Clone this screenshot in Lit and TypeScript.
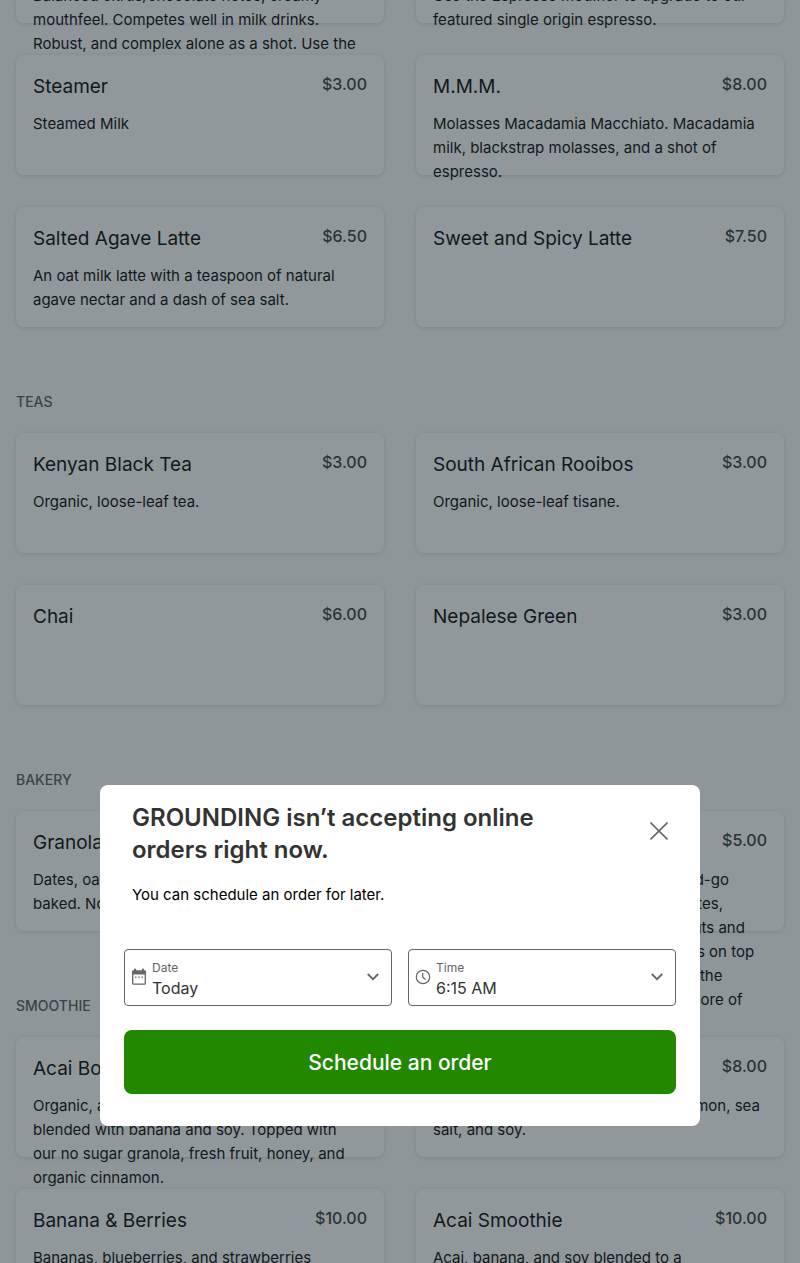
import { LitElement, html, css, svg } from "lit";
import { customElement, property } from "lit/decorators.js";

interface Item {
  name: string;
  price: string;
  text?: string;
}

interface Section {
  title?: string;
  items: Item[];
}

const MENU: Section[] = [
  {
    items: [
      {
        name: "Espresso",
        price: "$3.50",
        text: "Our signature blend.\nBalanced citrus/chocolate notes, creamy\nmouthfeel. Competes well in milk drinks.\nRobust, and complex alone as a shot. Use the",
      },
      {
        name: "Single Origin",
        price: "$4.00",
        text: "A rotating selection.\nUse the Espresso modifier to upgrade to our\nfeatured single origin espresso.",
      },
      { name: "Steamer", price: "$3.00", text: "Steamed Milk" },
      {
        name: "M.M.M.",
        price: "$8.00",
        text: "Molasses Macadamia Macchiato. Macadamia\nmilk, blackstrap molasses, and a shot of\nespresso.",
      },
      {
        name: "Salted Agave Latte",
        price: "$6.50",
        text: "An oat milk latte with a teaspoon of natural\nagave nectar and a dash of sea salt.",
      },
      { name: "Sweet and Spicy Latte", price: "$7.50" },
    ],
  },
  {
    title: "Teas",
    items: [
      { name: "Kenyan Black Tea", price: "$3.00", text: "Organic, loose-leaf tea." },
      { name: "South African Rooibos", price: "$3.00", text: "Organic, loose-leaf tisane." },
      { name: "Chai", price: "$6.00" },
      { name: "Nepalese Green", price: "$3.00" },
    ],
  },
  {
    title: "Bakery",
    items: [
      {
        name: "Granola Bar",
        price: "$5.00",
        text: "Dates, oats, and nuts, house\nbaked. No sugar added.",
      },
      {
        name: "Overnight Oats",
        price: "$5.00",
        text: "A creamy and filling, healthy grab-and-go\nbreakfast. Rolled oats, chia seeds, dates,\nand oat milk soaked overnight with nuts and\nseeds, then finished with fresh berries on top\nof a thick layer of our house jam, and the\nperfect start on mornings you need more of",
      },
    ],
  },
  {
    title: "Smoothie",
    items: [
      {
        name: "Acai Bowl",
        price: "$10.00",
        text: "Organic, acai puree\nblended with banana and soy. Topped with\nour no sugar granola, fresh fruit, honey, and\norganic cinnamon.",
      },
      {
        name: "Date Shake",
        price: "$8.00",
        text: "Dates, bananas, almond butter, cinnamon, sea\nsalt, and soy.",
      },
      {
        name: "Banana & Berries",
        price: "$10.00",
        text: "Bananas, blueberries, and strawberries\nblended with soy.",
      },
      {
        name: "Acai Smoothie",
        price: "$10.00",
        text: "Acai, banana, and soy blended to a\nsmooth finish.",
      },
    ],
  },
];

const calendarIcon = svg`<svg class="icon" viewBox="0 0 16 18" width="16" height="18" aria-hidden="true">
  <path d="M1.700 4.500V15.300a.9.9 0 0 0 .9.900H13.400a.9.9 0 0 0 .9-.900V4.500" fill="none" stroke="currentColor" stroke-width="1.300"/>
  <path d="M1 6.600V3.600A1.300 1.300 0 0 1 2.300 2.300H3V.8H5V2.300H11V.8H13V2.300H13.700A1.300 1.300 0 0 1 15 3.600V6.600Z" fill="currentColor"/>
  <path d="M4 8.400h1.500v1.300H4ZM7.250 8.400h1.500v1.300h-1.500ZM10.500 8.400H12v1.300h-1.500Z" fill="currentColor"/>
</svg>`;

const clockIcon = svg`<svg class="icon" viewBox="0 0 16 18" width="16" height="18" aria-hidden="true" fill="none" stroke="currentColor">
  <circle cx="8" cy="9" r="6.700" stroke-width="1.200"/>
  <path d="M7.700 5v4.300l2.900 2.200" stroke-width="1.200"/>
</svg>`;

const chevron = svg`<svg class="icon" viewBox="0 0 12 8" width="12" height="8" aria-hidden="true">
  <path d="M.8 1 6 6.200 11.200 1" fill="none" stroke="currentColor" stroke-width="1.800"/>
</svg>`;

@customElement("menu-card")
class MenuCard extends LitElement {
  @property({ attribute: false }) item!: Item;

  static styles = css`
    :host {
      display: block;
      box-sizing: border-box;
      height: 120px;
      padding: 16px 17px;
      border-radius: 8px;
      background: #fff;
      box-shadow: 0 1px 4px rgba(0, 0, 0, 0.14);
    }
    .head {
      display: flex;
      justify-content: space-between;
      gap: 16px;
    }
    .name {
      margin: 0;
      font-size: 19px;
      line-height: 32px;
      font-weight: 400;
      color: #000;
    }
    .price {
      font-size: 16px;
      line-height: 26px;
      font-weight: 500;
      color: #333;
    }
    .text {
      margin: 9px 0 0;
      font-size: 15px;
      line-height: 24px;
      white-space: pre;
      color: #000;
    }
  `;

  render() {
    const { name, price, text } = this.item;
    return html`
      <div class="head">
        <h3 class="name">${name}</h3>
        <span class="price">${price}</span>
      </div>
      ${text ? html`<p class="text">${text}</p>` : null}
    `;
  }
}

@customElement("schedule-dialog")
class ScheduleDialog extends LitElement {
  static styles = css`
    :host {
      display: block;
      box-sizing: border-box;
      width: 100%;
      max-width: 600px;
      padding: 17px 24px 32px;
      border-radius: 8px;
      background: #fff;
    }
    .head {
      display: flex;
      justify-content: space-between;
      align-items: flex-start;
      padding: 0 8px;
    }
    .title {
      flex: 1;
      max-width: 440px;
      margin: 0;
      font-size: 24px;
      line-height: 32px;
      font-weight: 600;
      color: #333;
    }
    .close {
      display: flex;
      margin: 19px 0 0;
      padding: 0;
      border: 0;
      background: none;
      color: #666;
    }
    .note {
      margin: 16px 8px 41px;
      font-size: 15px;
      line-height: 26px;
      color: #000;
    }
    .fields {
      display: grid;
      grid-template-columns: 1fr 1fr;
      gap: 16px;
      margin-bottom: 24px;
    }
    .field {
      display: flex;
      align-items: center;
      padding: 0 12px 0 6px;
      border: 1px solid #666;
      border-radius: 4px;
      color: #666;
    }
    .icon {
      margin-bottom: 2px;
    }
    .stack {
      flex: 1;
      display: flex;
      flex-direction: column;
      padding: 9px 0 7px 5px;
    }
    .label {
      font-size: 12px;
      line-height: 18px;
      color: #666;
    }
    .select {
      appearance: none;
      height: 21px;
      padding: 0;
      border: 0;
      background: none;
      font-family: inherit;
      font-size: 16px;
      line-height: 20px;
      color: #333;
    }
    .submit {
      display: block;
      width: 100%;
      height: 64px;
      border: 0;
      border-radius: 8px;
      background: #228800;
      font-family: inherit;
      font-size: 21px;
      font-weight: 500;
      color: #fff;
    }
  `;

  render() {
    return html`
      <div class="head">
        <h2 class="title">GROUNDING isn’t accepting online orders right now.</h2>
        <button class="close" aria-label="Close">
          <svg viewBox="0 0 18 18" width="18" height="20" aria-hidden="true">
            <path d="M.5.5 17.500 17.500M17.500.5.5 17.500" stroke="currentColor" stroke-width="1.700" />
          </svg>
        </button>
      </div>
      <p class="note">You can schedule an order for later.</p>
      <div class="fields">
        <div class="field">
          ${calendarIcon}
          <div class="stack">
            <label class="label" for="date">Date</label>
            <select class="select" id="date"><option>Today</option></select>
          </div>
          ${chevron}
        </div>
        <div class="field">
          ${clockIcon}
          <div class="stack">
            <label class="label" for="time">Time</label>
            <select class="select" id="time"><option>6:15 AM</option></select>
          </div>
          ${chevron}
        </div>
      </div>
      <button class="submit">Schedule an order</button>
    `;
  }
}

@customElement("app-root")
class AppRoot extends LitElement {
  static styles = css`
    :host {
      display: block;
      height: 100vh;
      overflow: hidden;
      background: #fafafa;
      font-family: Inter, "Liberation Sans", sans-serif;
    }
    /* The menu sits scrolled part of the way through its first row. */
    .menu {
      margin-top: -97px;
      padding: 0 16px;
    }
    .section {
      display: flow-root;
    }
    .heading {
      margin: 65px 0 21px;
      font-size: 14px;
      line-height: 20px;
      font-weight: 500;
      text-transform: uppercase;
      color: #555;
    }
    .grid {
      display: grid;
      grid-template-columns: 1fr 1fr;
      gap: 32px;
    }
    .scrim {
      position: fixed;
      inset: 0;
      display: flex;
      align-items: flex-end;
      justify-content: center;
      padding-bottom: 137px;
      background: rgba(33, 49, 55, 0.5);
    }
  `;

  render() {
    return html`
      <main class="menu">
        ${MENU.map(
          (section) => html`
            <section class="section">
              ${section.title ? html`<h2 class="heading">${section.title}</h2>` : null}
              <div class="grid">
                ${section.items.map((item) => html`<menu-card .item=${item}></menu-card>`)}
              </div>
            </section>
          `
        )}
      </main>
      <div class="scrim">
        <schedule-dialog role="dialog" aria-modal="true"></schedule-dialog>
      </div>
    `;
  }
}
